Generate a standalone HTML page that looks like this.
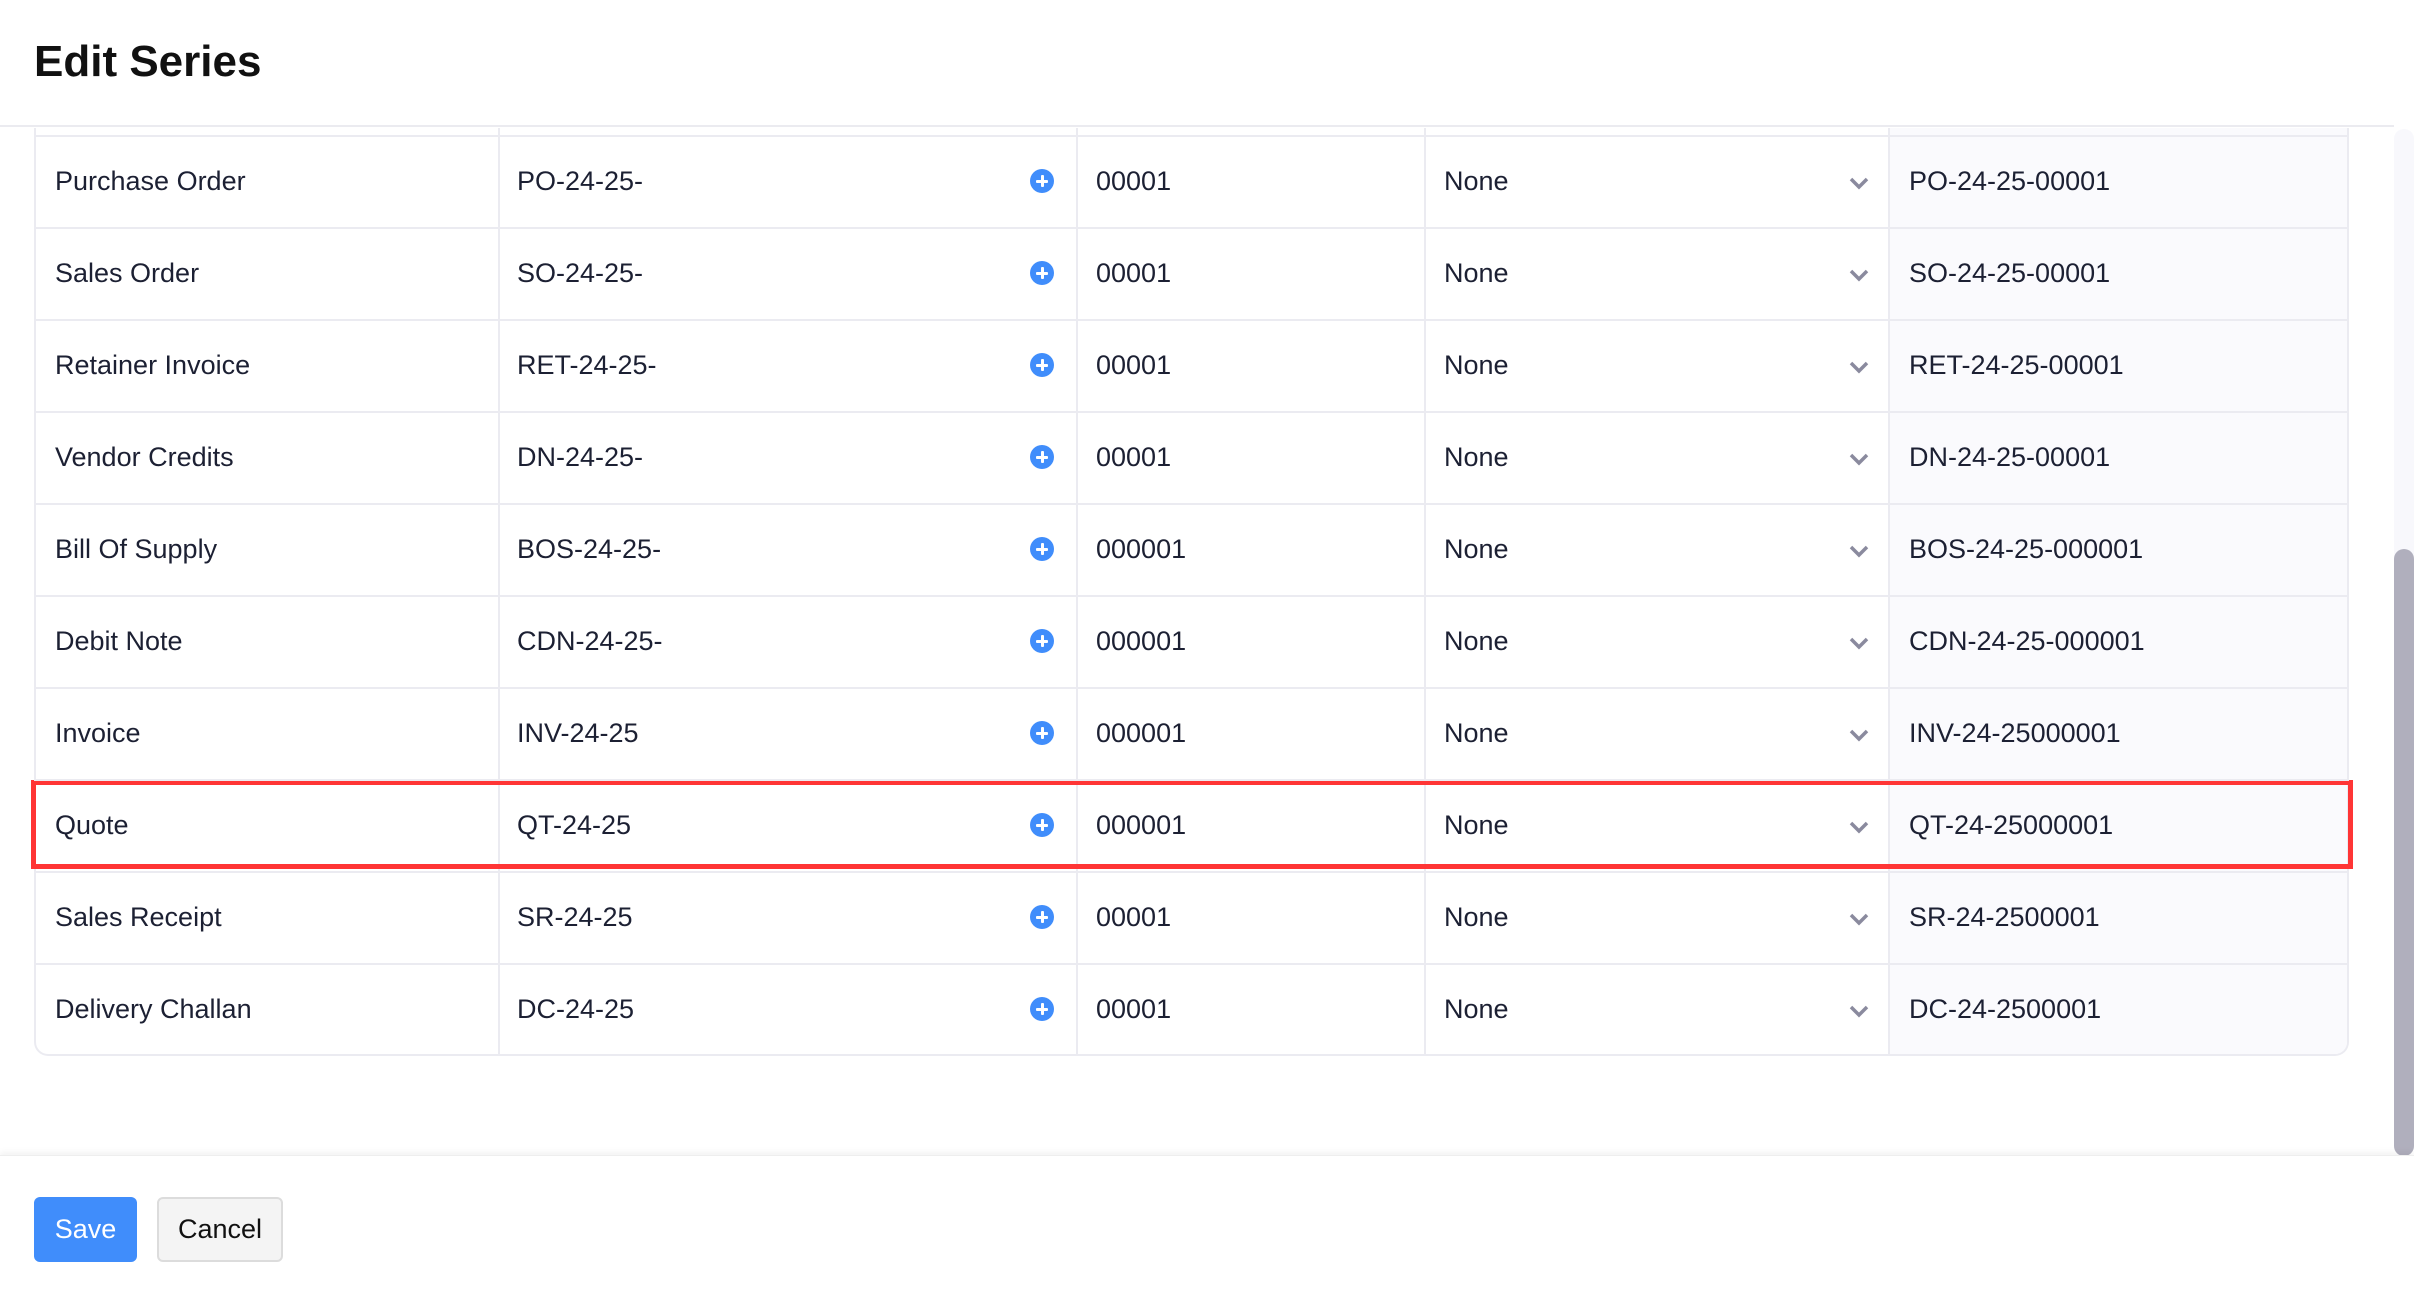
<!DOCTYPE html>
<html><head><meta charset="utf-8"><style>
*{margin:0;padding:0;box-sizing:border-box}
body{width:2414px;height:1300px;overflow:hidden;background:#fff;font-family:"Liberation Sans",Arial,sans-serif;color:#21263c;position:relative}
.title{position:absolute;left:34px;top:37px;font-size:44px;font-weight:bold;color:#111;letter-spacing:0px}
.hb{position:absolute;left:0;top:125px;width:2394px;height:2px;background:#ebebf0}
.tbl{position:absolute;left:34px;top:128px;width:2315px;height:928px;border:2px solid #ebebf1;border-top:none;border-radius:0 0 14px 14px;overflow:hidden}
.last{position:absolute;left:1854px;top:0;width:460px;height:100%;background:#fafafd}
.vl{position:absolute;top:0;width:2px;height:100%;background:#ebebf1}
.row{position:absolute;left:0;width:2315px;height:92px;border-top:2px solid #ebebf1}
.c{position:absolute;top:0;line-height:88px;font-size:27px;color:#1c2033}
.plus{position:absolute;left:996px;top:32px;width:24px;height:24px;border-radius:50%;background:#408dfb}
.plus:before{content:"";position:absolute;left:6px;top:10.5px;width:12px;height:3px;background:#fff;border-radius:1px}
.plus:after{content:"";position:absolute;left:10.5px;top:6px;width:3px;height:12px;background:#fff;border-radius:1px}
.chev{position:absolute;left:1814px;top:39px}
.red{position:absolute;left:31px;top:780px;width:2322px;height:89px;border:5px solid #ff3535}
.foot{position:absolute;left:0;top:1155px;width:2414px;height:145px;background:#fff;box-shadow:0 -3px 6px rgba(0,0,0,0.05);border-top:1px solid #eee}
.save{position:absolute;left:34px;top:1197px;width:103px;height:65px;background:#408dfb;border-radius:6px;color:#fff;font-size:27px;line-height:65px;text-align:center}
.cancel{position:absolute;left:157px;top:1197px;width:126px;height:65px;background:#f4f4f4;border:2px solid #dcdcdc;border-radius:6px;color:#111;font-size:27px;line-height:61px;text-align:center}
.track{position:absolute;left:2394px;top:129px;width:20px;height:1027px;background:#f8f8fc;border-radius:10px}
.thumb{position:absolute;left:2394px;top:549px;width:20px;height:607px;background:#b0afbd;border-radius:10px}
</style></head><body>
<div class="title">Edit Series</div>
<div class="hb"></div>
<div class="tbl">
<div class="last"></div>
<div class="vl" style="left:462px"></div>
<div class="vl" style="left:1040px"></div>
<div class="vl" style="left:1388px"></div>
<div class="vl" style="left:1852px"></div>
</div>
<div class="red"></div>
<div class="track"></div><div class="thumb"></div>
<div class="foot"></div>
<div class="save">Save</div>
<div class="cancel">Cancel</div>
<div style="position:absolute;left:34px;top:135px">
<div class="row" style="top:0"><div class="c" style="left:21px">Purchase Order</div><div class="c" style="left:483px">PO-24-25-</div><div class="plus"></div><div class="c" style="left:1062px">00001</div><div class="c" style="left:1410px">None</div><svg class="chev" width="22" height="14" viewBox="0 0 22 14"><path d="M3 3l8 8 8-8" fill="none" stroke="#8a8a9e" stroke-width="3.5"/></svg><div class="c" style="left:1875px">PO-24-25-00001</div></div>
<div class="row" style="top:92px"><div class="c" style="left:21px">Sales Order</div><div class="c" style="left:483px">SO-24-25-</div><div class="plus"></div><div class="c" style="left:1062px">00001</div><div class="c" style="left:1410px">None</div><svg class="chev" width="22" height="14" viewBox="0 0 22 14"><path d="M3 3l8 8 8-8" fill="none" stroke="#8a8a9e" stroke-width="3.5"/></svg><div class="c" style="left:1875px">SO-24-25-00001</div></div>
<div class="row" style="top:184px"><div class="c" style="left:21px">Retainer Invoice</div><div class="c" style="left:483px">RET-24-25-</div><div class="plus"></div><div class="c" style="left:1062px">00001</div><div class="c" style="left:1410px">None</div><svg class="chev" width="22" height="14" viewBox="0 0 22 14"><path d="M3 3l8 8 8-8" fill="none" stroke="#8a8a9e" stroke-width="3.5"/></svg><div class="c" style="left:1875px">RET-24-25-00001</div></div>
<div class="row" style="top:276px"><div class="c" style="left:21px">Vendor Credits</div><div class="c" style="left:483px">DN-24-25-</div><div class="plus"></div><div class="c" style="left:1062px">00001</div><div class="c" style="left:1410px">None</div><svg class="chev" width="22" height="14" viewBox="0 0 22 14"><path d="M3 3l8 8 8-8" fill="none" stroke="#8a8a9e" stroke-width="3.5"/></svg><div class="c" style="left:1875px">DN-24-25-00001</div></div>
<div class="row" style="top:368px"><div class="c" style="left:21px">Bill Of Supply</div><div class="c" style="left:483px">BOS-24-25-</div><div class="plus"></div><div class="c" style="left:1062px">000001</div><div class="c" style="left:1410px">None</div><svg class="chev" width="22" height="14" viewBox="0 0 22 14"><path d="M3 3l8 8 8-8" fill="none" stroke="#8a8a9e" stroke-width="3.5"/></svg><div class="c" style="left:1875px">BOS-24-25-000001</div></div>
<div class="row" style="top:460px"><div class="c" style="left:21px">Debit Note</div><div class="c" style="left:483px">CDN-24-25-</div><div class="plus"></div><div class="c" style="left:1062px">000001</div><div class="c" style="left:1410px">None</div><svg class="chev" width="22" height="14" viewBox="0 0 22 14"><path d="M3 3l8 8 8-8" fill="none" stroke="#8a8a9e" stroke-width="3.5"/></svg><div class="c" style="left:1875px">CDN-24-25-000001</div></div>
<div class="row" style="top:552px"><div class="c" style="left:21px">Invoice</div><div class="c" style="left:483px">INV-24-25</div><div class="plus"></div><div class="c" style="left:1062px">000001</div><div class="c" style="left:1410px">None</div><svg class="chev" width="22" height="14" viewBox="0 0 22 14"><path d="M3 3l8 8 8-8" fill="none" stroke="#8a8a9e" stroke-width="3.5"/></svg><div class="c" style="left:1875px">INV-24-25000001</div></div>
<div class="row" style="top:644px"><div class="c" style="left:21px">Quote</div><div class="c" style="left:483px">QT-24-25</div><div class="plus"></div><div class="c" style="left:1062px">000001</div><div class="c" style="left:1410px">None</div><svg class="chev" width="22" height="14" viewBox="0 0 22 14"><path d="M3 3l8 8 8-8" fill="none" stroke="#8a8a9e" stroke-width="3.5"/></svg><div class="c" style="left:1875px">QT-24-25000001</div></div>
<div class="row" style="top:736px"><div class="c" style="left:21px">Sales Receipt</div><div class="c" style="left:483px">SR-24-25</div><div class="plus"></div><div class="c" style="left:1062px">00001</div><div class="c" style="left:1410px">None</div><svg class="chev" width="22" height="14" viewBox="0 0 22 14"><path d="M3 3l8 8 8-8" fill="none" stroke="#8a8a9e" stroke-width="3.5"/></svg><div class="c" style="left:1875px">SR-24-2500001</div></div>
<div class="row" style="top:828px"><div class="c" style="left:21px">Delivery Challan</div><div class="c" style="left:483px">DC-24-25</div><div class="plus"></div><div class="c" style="left:1062px">00001</div><div class="c" style="left:1410px">None</div><svg class="chev" width="22" height="14" viewBox="0 0 22 14"><path d="M3 3l8 8 8-8" fill="none" stroke="#8a8a9e" stroke-width="3.5"/></svg><div class="c" style="left:1875px">DC-24-2500001</div></div>
</div>
</body></html>
